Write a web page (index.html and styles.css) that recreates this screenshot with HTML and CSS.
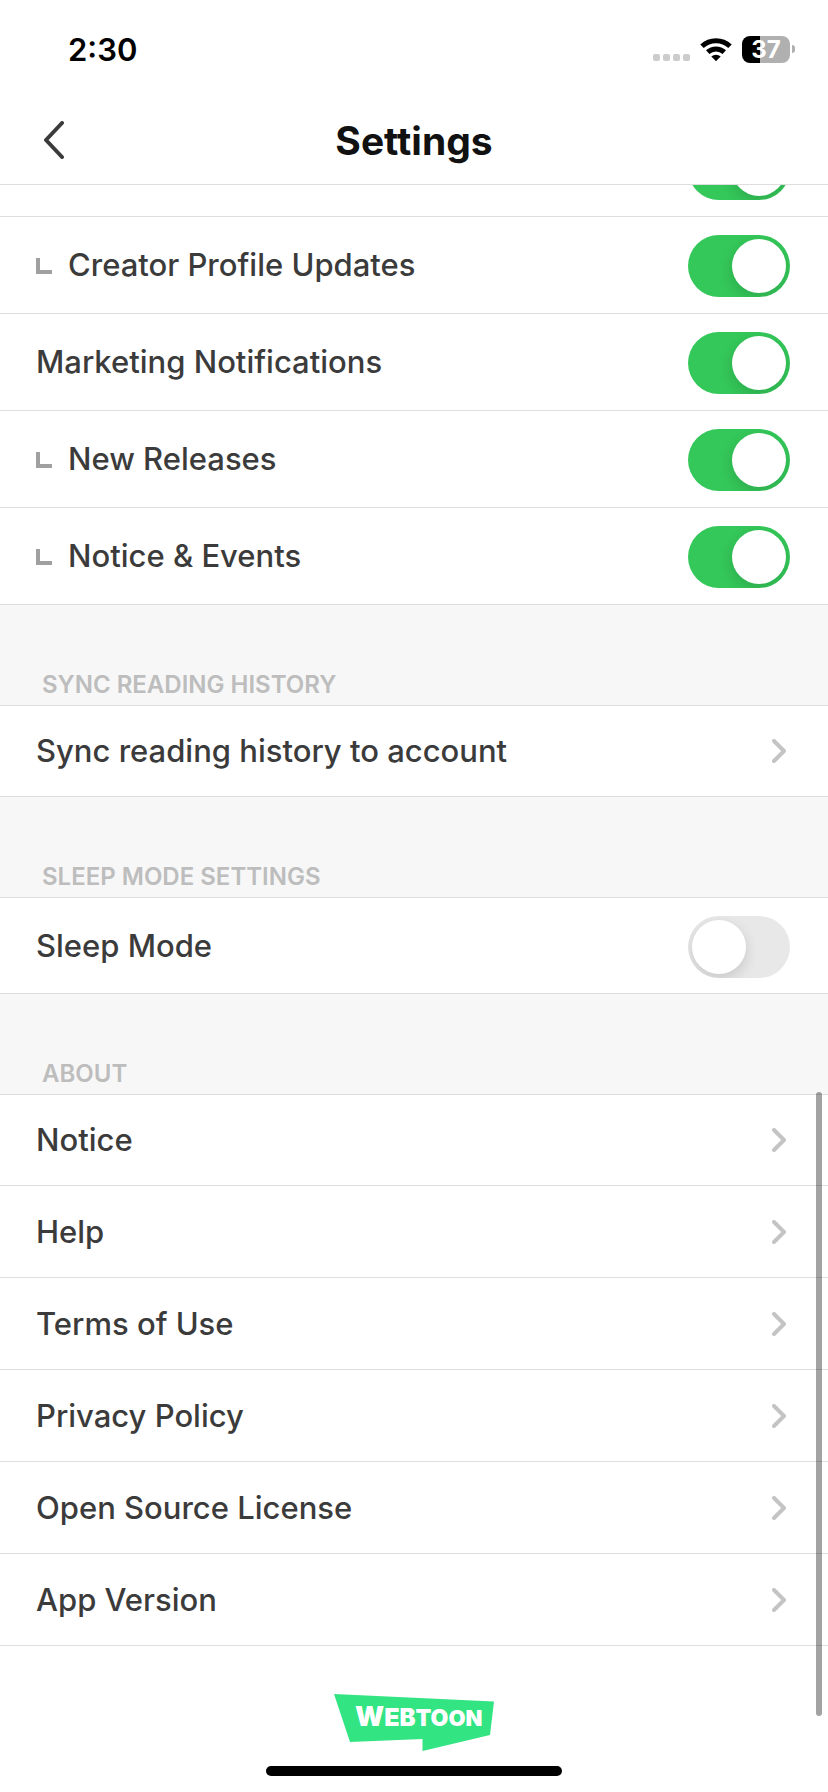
FILE: index.html
```html
<!DOCTYPE html>
<html lang="en">
<head>
<meta charset="utf-8">
<meta name="viewport" content="width=device-width, initial-scale=1">
<title>Settings</title>
<link rel="stylesheet" href="styles.css">
</head>
<body>
<svg class="defs" aria-hidden="true">
  <symbol id="chevron" viewBox="0 0 14 24"><path d="M2 2l10 10L2 22" fill="none" stroke="currentColor" stroke-width="4" stroke-linecap="round" stroke-linejoin="round"/></symbol>
</svg>
<div class="screen">
  <div class="status">
    <span class="time">2:30</span>
    <div class="indicators">
      <span class="dots"><i></i><i></i><i></i><i></i></span>
      <svg class="wifi" viewBox="0 0 32 24" aria-label="Wi-Fi">
        <g fill="none" stroke="#000" stroke-width="5">
          <path d="M2 9.2a20.4 20.4 0 0 1 28 0"/>
          <path d="M7.700 15.200a12.300 12.300 0 0 1 16.600 0"/>
        </g>
        <path d="M11.300 19.400a7.200 7.200 0 0 1 9.400 0L16 24.200z"/>
      </svg>
      <span class="battery"><span class="level">37</span><i class="nub"></i></span>
    </div>
  </div>
  <header class="nav">
    <button class="back" type="button" aria-label="Back">
      <svg viewBox="0 0 20 38"><path d="M18 2L2 19l16 17" fill="none" stroke="#3b3b3b" stroke-width="4" stroke-linecap="round" stroke-linejoin="round"/></svg>
    </button>
    <h1>Settings</h1>
  </header>
  <main class="list">
    <div class="group">
      <div class="row peek"><input class="toggle" type="checkbox" aria-label="Updates" checked></div>
      <label class="row switch"><i class="corner"></i><span class="text">Creator Profile Updates</span><input class="toggle" type="checkbox" checked></label>
      <label class="row switch"><span class="text">Marketing Notifications</span><input class="toggle" type="checkbox" checked></label>
      <label class="row switch"><i class="corner"></i><span class="text">New Releases</span><input class="toggle" type="checkbox" checked></label>
      <label class="row switch"><i class="corner"></i><span class="text">Notice &amp; Events</span><input class="toggle" type="checkbox" checked></label>
    </div>
    <h2>SYNC READING HISTORY</h2>
    <div class="group">
      <a class="row link" href="#"><span class="text">Sync reading history to account</span><svg class="chevron"><use href="#chevron"/></svg></a>
    </div>
    <h2>SLEEP MODE SETTINGS</h2>
    <div class="group">
      <label class="row switch"><span class="text">Sleep Mode</span><input class="toggle" type="checkbox"></label>
    </div>
    <h2>ABOUT</h2>
    <div class="group">
      <a class="row link" href="#"><span class="text">Notice</span><svg class="chevron"><use href="#chevron"/></svg></a>
      <a class="row link" href="#"><span class="text">Help</span><svg class="chevron"><use href="#chevron"/></svg></a>
      <a class="row link" href="#"><span class="text">Terms of Use</span><svg class="chevron"><use href="#chevron"/></svg></a>
      <a class="row link" href="#"><span class="text">Privacy Policy</span><svg class="chevron"><use href="#chevron"/></svg></a>
      <a class="row link" href="#"><span class="text">Open Source License</span><svg class="chevron"><use href="#chevron"/></svg></a>
      <a class="row link" href="#"><span class="text">App Version</span><svg class="chevron"><use href="#chevron"/></svg></a>
    </div>
    <span class="scrollbar"></span>
  </main>
  <footer class="footer">
    <svg class="logo" viewBox="0 0 160 58" role="img" aria-label="WEBTOON">
      <path d="M0 0L160 7.500L156 41L88.500 57V45L16 48z" fill="#32e482"/>
      <text class="logo-text" x="21" y="32"><tspan font-size="27">W</tspan><tspan font-size="25">E</tspan><tspan font-size="24">B</tspan><tspan font-size="23">T</tspan><tspan font-size="23">O</tspan><tspan font-size="22">O</tspan><tspan font-size="22">N</tspan></text>
    </svg>
    <span class="home"></span>
  </footer>
</div>
</body>
</html>
```
FILE: styles.css
```css
* { box-sizing: border-box; }

body {
  margin: 0;
  background: #fff;
  color: #3b3b3b;
  font-family: Inter, "Liberation Sans", sans-serif;
}

.defs { position: absolute; width: 0; height: 0; }

.screen {
  display: flex;
  flex-direction: column;
  min-height: 100vh;
}

.status {
  display: flex;
  align-items: center;
  justify-content: space-between;
  height: 98px;
  padding: 0 33px 0 68px;
}

.time {
  color: #000;
  font-size: 31px;
  font-weight: 600;
}

.indicators { display: flex; align-items: center; gap: 10px; }

.dots { display: flex; gap: 3px; padding-top: 16px; }
.dots i { width: 7px; height: 7px; border-radius: 2px; background: #ccc; }

.wifi { width: 32px; height: 24px; }

.battery { display: flex; align-items: center; gap: 2px; }

.level {
  width: 48px;
  border-radius: 8px;
  background: linear-gradient(to right, #000 18px, #b0b0b0 18px);
  color: #fff;
  font-size: 24px;
  font-weight: 700;
  line-height: 27px;
  text-align: center;
}

.nub { width: 3px; height: 8px; border-radius: 0 3px 3px 0; background: #b0b0b0; }

.nav {
  display: grid;
  grid-template-columns: 64px 1fr 64px;
  align-items: center;
  height: 87px;
  padding: 0 36px 2px;
  border-bottom: 1px solid #dedede;
}

.back {
  display: flex;
  padding: 8px;
  border: 0;
  background: none;
}
.back svg { width: 20px; height: 38px; }

h1 {
  margin: 0;
  color: #111;
  font-size: 39px;
  font-weight: 700;
  text-align: center;
}

.list { position: relative; }

.row {
  display: flex;
  align-items: center;
  padding: 0 38px 0 36px;
  border-bottom: 1px solid #dedede;
  color: inherit;
  text-decoration: none;
}

.peek {
  align-items: flex-end;
  justify-content: flex-end;
  height: 32px;
  padding-bottom: 16px;
  overflow: hidden;
}

.switch { height: 97px; }
.switch:first-child { height: 96px; }
.link { height: 92px; }
.link:first-child { height: 91px; }

.text {
  flex: 1;
  font-size: 31px;
  font-weight: 500;
  line-height: 40px;
}

.corner {
  width: 16px;
  height: 16px;
  margin: 2px 16px 0 0;
  border: solid #a0a0a0;
  border-width: 0 0 4px 4px;
}

.toggle {
  flex: none;
  width: 102px;
  height: 62px;
  margin: 2px 0 0;
  padding: 4px;
  overflow: hidden;
  border-radius: 31px;
  background: #e8e8e8;
  appearance: none;
}
.toggle::before {
  content: "";
  display: block;
  width: 54px;
  height: 54px;
  border-radius: 50%;
  background: #fff;
  box-shadow: 0 5px 14px rgba(0, 0, 0, 0.14);
}
.toggle:checked { background: #34c759; }
.toggle:checked::before { margin-left: auto; }

.chevron { width: 14px; height: 24px; margin-right: 4px; color: #c4c4c4; }

h2 {
  display: flex;
  align-items: flex-end;
  height: 101px;
  margin: 0;
  padding: 0 42px 6px;
  border-bottom: 1px solid #dedede;
  background: #f7f7f7;
  color: #bdbdbd;
  font-size: 24px;
  font-weight: 600;
  line-height: 28px;
}

.scrollbar {
  position: absolute;
  top: 907px;
  right: 6px;
  width: 6px;
  height: 624px;
  border-radius: 3px;
  background: rgba(0, 0, 0, 0.36);
}

.footer {
  display: flex;
  flex: 1;
  flex-direction: column;
  align-items: center;
  justify-content: space-between;
  padding: 48px 0 16px;
}

.logo { width: 160px; height: 58px; }
.logo-text { fill: #fff; font-weight: 900; }

.home { width: 296px; height: 10px; border-radius: 5px; background: #000; }
```
